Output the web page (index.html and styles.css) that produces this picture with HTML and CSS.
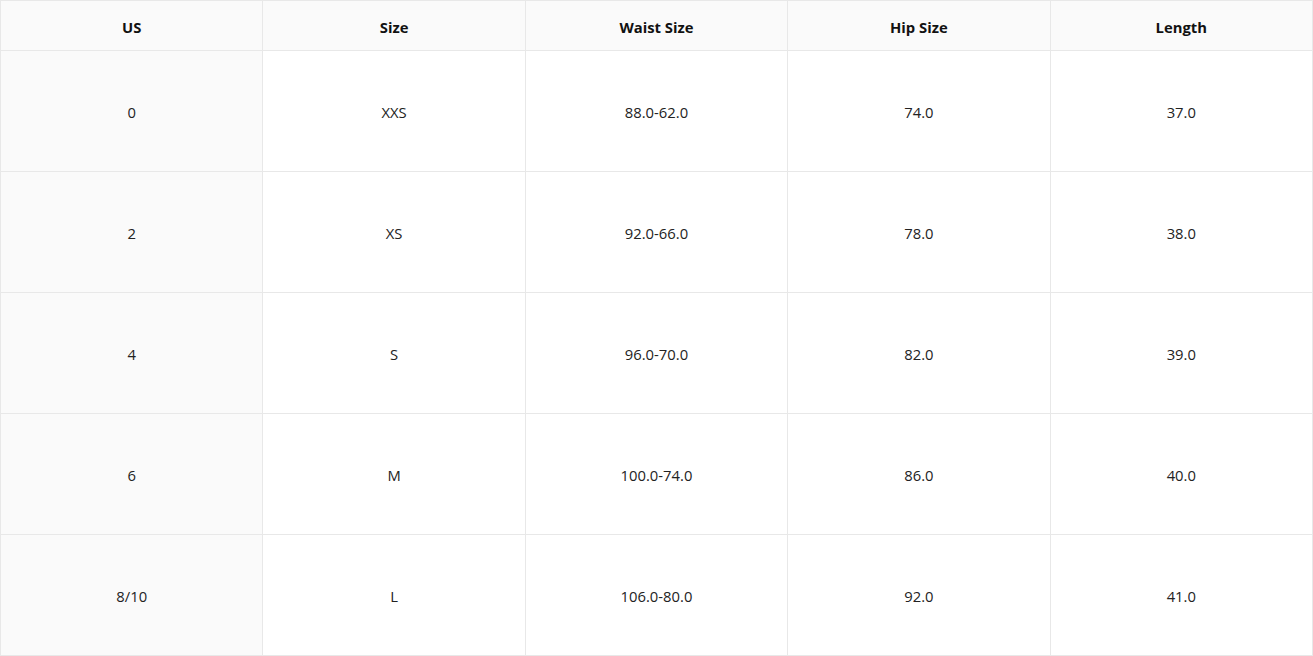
FILE: index.html
```html
<!DOCTYPE html>
<html>
<head>
<meta charset="utf-8">
<link rel="stylesheet" href="styles.css">
</head>
<body>
<table class="size-table">
  <thead>
    <tr><th>US</th><th>Size</th><th>Waist Size</th><th>Hip Size</th><th>Length</th></tr>
  </thead>
  <tbody>
    <tr><td class="first">0</td><td>XXS</td><td>88.0-62.0</td><td>74.0</td><td>37.0</td></tr>
    <tr><td class="first">2</td><td>XS</td><td>92.0-66.0</td><td>78.0</td><td>38.0</td></tr>
    <tr><td class="first">4</td><td>S</td><td>96.0-70.0</td><td>82.0</td><td>39.0</td></tr>
    <tr><td class="first">6</td><td>M</td><td>100.0-74.0</td><td>86.0</td><td>40.0</td></tr>
    <tr><td class="first">8/10</td><td>L</td><td>106.0-80.0</td><td>92.0</td><td>41.0</td></tr>
  </tbody>
</table>
</body>
</html>
```
FILE: styles.css
```css
html, body {
  margin: 0;
  padding: 0;
  background: #ffffff;
}
.size-table {
  width: 1313px;
  border-collapse: collapse;
  table-layout: fixed;
  font-family: "Open Sans", "Liberation Sans", sans-serif;
  font-size: 14.8px;
  color: #222;
}
.size-table th,
.size-table td {
  border: 1px solid #e8e8e8;
  text-align: center;
  vertical-align: middle;
  line-height: 20px;
}
.size-table th {
  height: 46px;
  padding: 3px 0 0 0;
  background: #fafafa;
  font-weight: 700;
  color: #111;
}
.size-table td {
  height: 118px;
  padding: 2px 0 0 0;
  background: #fff;
}
.size-table td.first {
  background: #fafafa;
}
```
